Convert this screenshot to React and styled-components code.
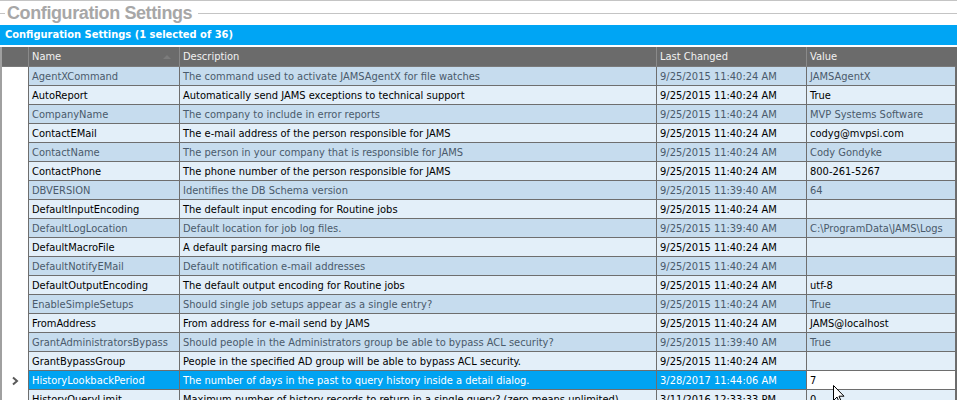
import React from 'react';
import styled, { createGlobalStyle } from 'styled-components';

const GlobalStyle = createGlobalStyle`
  html, body {
    margin: 0;
    padding: 0;
    background: #ffffff;
    overflow: hidden;
  }
  body {
    font-family: "DejaVu Sans Condensed", "DejaVu Sans", sans-serif;
    font-size: 11px;
  }
`;

const Page = styled.div`
  width: 957px;
  height: 400px;
  border-top: 1px solid #c4c4c4;
  box-sizing: border-box;
  position: relative;
  overflow: hidden;
`;

const Legend = styled.div`
  display: flex;
  align-items: center;
  height: 24px;
  gap: 2px;
`;

const LegendRule = styled.div`
  height: 1px;
  background: #c4c4c4;
  flex: ${p => (p.$grow ? 1 : 'none')};
  width: ${p => (p.$grow ? 'auto' : '5px')};
`;

const LegendTitle = styled.div`
  font-family: "Liberation Sans", Arial, sans-serif;
  font-weight: bold;
  font-size: 18px;
  letter-spacing: -0.4px;
  color: #a7a7a7;
  line-height: 24px;
  padding-right: 4px;
`;

const Band = styled.div`
  height: 20px;
  background: #00a5f4;
  color: #ffffff;
  font-weight: bold;
  font-size: 11px;
  line-height: 20px;
  padding-left: 5px;
`;

const Grid = styled.div`
  margin-top: 2px;
  display: grid;
  grid-template-columns: 27px 151px 477px 150px 149px 1px;
  border-left: 2px solid #a0a0a0;
`;

const HeadCell = styled.div`
  position: relative;
  height: 20px;
  box-sizing: border-box;
  background: #6b6b6b;
  color: #f2f2f2;
  line-height: 20px;
  padding-left: 3px;
  border-right: 1px solid ${p => (p.$last ? '#6b6b6b' : '#8a8a8a')};
  border-bottom: 1px solid #7a7a7a;
  white-space: nowrap;
`;

const SortMark = styled.span`
  position: absolute;
  right: 8px;
  top: 8px;
  width: 0;
  height: 0;
  border-left: 4px solid transparent;
  border-right: 4px solid transparent;
  border-bottom: 4px solid #7c7c7c;
`;

const Indicator = styled.div`
  height: 19px;
  box-sizing: border-box;
  background: #ffffff;
  border-right: 1px solid #6e6e6e;
  display: flex;
  align-items: center;
  justify-content: center;
`;

const rowBg = p => (p.$selected ? '#00a3f2' : p.$odd ? '#c6dcee' : '#e3eff9');
const rowFg = p => (p.$selected ? '#ffffff' : p.$odd ? '#4a5a6b' : '#000000');

const Cell = styled.div`
  height: 19px;
  box-sizing: border-box;
  background: ${p => (p.$editing ? '#ffffff' : rowBg(p))};
  color: ${p => (p.$editing ? '#000000' : rowFg(p))};
  border-right: 1px solid #6e6e6e;
  border-bottom: 1px solid #6e6e6e;
  line-height: 19px;
  padding-left: 3px;
  white-space: nowrap;
  overflow: hidden;
`;

const Edge = styled.div`
  height: ${p => (p.$head ? 20 : 19)}px;
  background: #6b6b6b;
`;

const Pointer = styled.svg`
  position: absolute;
  left: 833px;
  top: 384px;
`;

const Chevron = () => (
  <svg width="8" height="10" viewBox="0 0 8 10">
    <path d="M2 1.5 L6 5 L2 8.5" fill="none" stroke="#5a5a5a" strokeWidth="2" />
  </svg>
);

const rows = [
  ['AgentXCommand', 'The command used to activate JAMSAgentX for file watches', '9/25/2015 11:40:24 AM', 'JAMSAgentX'],
  ['AutoReport', 'Automatically send JAMS exceptions to technical support', '9/25/2015 11:40:24 AM', 'True'],
  ['CompanyName', 'The company to include in error reports', '9/25/2015 11:40:24 AM', 'MVP Systems Software'],
  ['ContactEMail', 'The e-mail address of the person responsible for JAMS', '9/25/2015 11:40:24 AM', 'codyg@mvpsi.com'],
  ['ContactName', 'The person in your company that is responsible for JAMS', '9/25/2015 11:40:24 AM', 'Cody Gondyke'],
  ['ContactPhone', 'The phone number of the person responsible for JAMS', '9/25/2015 11:40:24 AM', '800-261-5267'],
  ['DBVERSION', 'Identifies the DB Schema version', '9/25/2015 11:39:40 AM', '64'],
  ['DefaultInputEncoding', 'The default input encoding for Routine jobs', '9/25/2015 11:40:24 AM', ''],
  ['DefaultLogLocation', 'Default location for job log files.', '9/25/2015 11:39:40 AM', 'C:\\ProgramData\\JAMS\\Logs'],
  ['DefaultMacroFile', 'A default parsing macro file', '9/25/2015 11:40:24 AM', ''],
  ['DefaultNotifyEMail', 'Default notification e-mail addresses', '9/25/2015 11:40:24 AM', ''],
  ['DefaultOutputEncoding', 'The default output encoding for Routine jobs', '9/25/2015 11:40:24 AM', 'utf-8'],
  ['EnableSimpleSetups', 'Should single job setups appear as a single entry?', '9/25/2015 11:40:24 AM', 'True'],
  ['FromAddress', 'From address for e-mail send by JAMS', '9/25/2015 11:40:24 AM', 'JAMS@localhost'],
  ['GrantAdministratorsBypass', 'Should people in the Administrators group be able to bypass ACL security?', '9/25/2015 11:39:40 AM', 'True'],
  ['GrantBypassGroup', 'People in the specified AD group will be able to bypass ACL security.', '9/25/2015 11:40:24 AM', ''],
  ['HistoryLookbackPeriod', 'The number of days in the past to query history inside a detail dialog.', '3/28/2017 11:44:06 AM', '7'],
  ['HistoryQueryLimit', 'Maximum number of history records to return in a single query? (zero means unlimited)', '3/11/2016 12:33:33 PM', '0']
];

const SELECTED = 16;

const App = () => (
  <Page>
    <GlobalStyle />
    <Legend>
      <LegendRule />
      <LegendTitle>{'Configuration Settings'}</LegendTitle>
      <LegendRule $grow />
    </Legend>
    <Band>{'Configuration Settings (1 selected of 36)'}</Band>
    <Grid>
      <HeadCell />
      <HeadCell>
        {'Name'}
        <SortMark />
      </HeadCell>
      <HeadCell>{'Description'}</HeadCell>
      <HeadCell>{'Last Changed'}</HeadCell>
      <HeadCell $last>{'Value'}</HeadCell>
      <Edge $head />
      {rows.map((r, i) => {
        const odd = i % 2 === 0;
        const selected = i === SELECTED;
        return (
          <React.Fragment key={r[0]}>
            <Indicator>{selected && <Chevron />}</Indicator>
            {r.map((v, j) => (
              <Cell key={j} $odd={odd} $selected={selected} $editing={selected && j === 3}>
                {v}
              </Cell>
            ))}
            <Edge />
          </React.Fragment>
        );
      })}
    </Grid>
    <Pointer width="12" height="19" viewBox="0 0 12 19">
      <path d="M0.5 0.5 L0.5 15.5 L4 12 L6.5 18 L8.5 17 L6 11.2 L11 11.2 Z" fill="#ffffff" stroke="#000000" strokeWidth="1" />
    </Pointer>
  </Page>
);

export default App;
